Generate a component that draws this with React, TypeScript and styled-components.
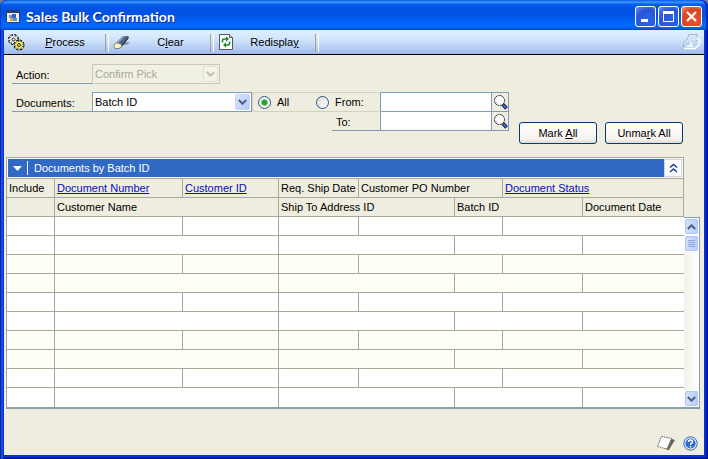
import React from "react";
import styled, { createGlobalStyle, css } from "styled-components";

const LINE = "#a9a99b";
const BLUE_LINE = "#7f9db9";
const FACE = "#eeeddf";

const GlobalStyle = createGlobalStyle`
  * { box-sizing: border-box; }
  body {
    margin: 0;
    background: #77808e;
    color: #000;
    font: 11px/14px "Liberation Sans", Arial, sans-serif;
  }
  button, input, select { font: inherit; color: inherit; }
`;

const Window = styled.div`
  display: flex;
  flex-direction: column;
  min-height: 100vh;
  padding: 0 4px 4px;
  border-radius: 7px 7px 0 0;
  background: #0831d9;
  box-shadow: inset 1px 0 #001ea0, inset 3px 0 #0f4fe6, inset -1px -1px #00138c, inset -2px -2px #001fb4;
`;

const TitleBar = styled.header`
  display: flex;
  align-items: center;
  gap: 2px;
  height: 30px;
  margin: 0 -4px;
  padding: 3px 6px 0;
  border-radius: 7px 7px 0 0;
  background: linear-gradient(#0758dd 0, #3a93ff 2px, #2b86fa 3px, #0a60ee 4px, #0355e6 7px, #0251e2 14px, #0260f6 21px, #026afe 25px, #0262f2 28px, #0140c0 30px);
  box-shadow: inset 1px 0 #0a3fc8, inset -2px 0 #002db4;
`;

const Title = styled.h1`
  flex: 1;
  margin: 0 0 0 4px;
  color: #fff;
  font-family: Lato, "Liberation Sans", sans-serif;
  font-size: 14px;
  line-height: 18px;
  font-weight: bold;
  text-shadow: 1px 1px #0a2a90;
`;

const CaptionButton = styled.button<{ $close?: boolean }>`
  display: grid;
  place-items: center;
  width: 21px;
  height: 21px;
  padding: 0;
  border: 1px solid #fff;
  border-radius: 3px;
  background: ${(p) =>
    p.$close
      ? "radial-gradient(circle at 65% 70%, #e2512b 20%, #d8441f 60%, #ee9377 100%)"
      : "radial-gradient(circle at 65% 70%, #2a5fe8 20%, #2a56d8 60%, #6f93f0 100%)"};
`;

const Client = styled.main`
  display: flex;
  flex: 1;
  flex-direction: column;
  background: ${FACE};
`;

const Toolbar = styled.div`
  display: flex;
  align-items: center;
  height: 25px;
  padding-right: 3px;
  border-bottom: 1px solid #000;
  background: linear-gradient(#dff0ff, #d0e4fb 40%, #b6cdf3 75%, #9fb8e8);
`;

const Tool = styled.button`
  display: flex;
  align-items: center;
  width: 105px;
  height: 24px;
  padding: 0 0 0 4px;
  border: 0;
  background: none;
  span { flex: 1; text-align: center; }
  &::after {
    content: "";
    width: 2px;
    height: 18px;
    margin-top: 2px;
    border-left: 1px solid #a5a397;
    border-right: 1px solid #fff;
  }
`;

const PrintButton = styled.button`
  display: flex;
  margin-left: auto;
  padding: 0;
  border: 0;
  background: none;
`;

const Form = styled.section`
  display: flex;
  gap: 10px;
  padding: 9px 21px 13px 8px;
`;

const Fields = styled.div`
  flex: 1;
  min-width: 0;
`;

const FieldRow = styled.div<{ $gap?: boolean; $overlap?: boolean }>`
  display: flex;
  height: 20px;
  ${(p) => p.$gap && css`margin-bottom: 8px;`}
  ${(p) => p.$overlap && css`margin-top: -1px; padding-left: 320px;`}
`;

const FieldLabel = styled.label<{ $short?: boolean }>`
  flex: none;
  width: ${(p) => (p.$short ? 48 : 80)}px;
  padding: 4px 0 0 4px;
  border-bottom: 1px solid ${BLUE_LINE};
`;

const Combo = styled.div<{ $wide?: boolean; $disabled?: boolean }>`
  display: flex;
  flex: none;
  position: relative;
  width: ${(p) => (p.$wide ? 160 : 128)}px;
  border: 1px solid ${(p) => (p.$disabled ? "#c9c7ba" : BLUE_LINE)};
  background: ${(p) => (p.$disabled ? "#f1f0e4" : "#fff")};
  select {
    width: 100%;
    padding: 0 18px 0 2px;
    border: 0;
    background: none;
    appearance: none;
    outline: none;
    opacity: 1;
    color: ${(p) => (p.$disabled ? "#a8a898" : "#000")};
  }
`;

const ComboArrow = styled.span<{ $disabled?: boolean }>`
  display: grid;
  place-items: center;
  position: absolute;
  inset: 1px 1px 1px auto;
  width: 15px;
  border-radius: 2px;
  pointer-events: none;
  color: ${(p) => (p.$disabled ? "#c4c2b4" : "#4d6185")};
  background: ${(p) => (p.$disabled ? "#f4f3ea" : "linear-gradient(135deg, #dbe6ff, #b4c9f8)")};
  border: 1px solid ${(p) => (p.$disabled ? "#e3e1d4" : "#c3d3fd")};
`;

const RadioGroup = styled.div`
  display: flex;
  flex: none;
  width: 128px;
  padding-left: 5px;
  border: 1px solid #d3d2bf;
  border-right: 0;
  border-radius: 3px;
  label { display: flex; align-items: center; gap: 6px; width: 58px; }
  input {
    appearance: none;
    width: 13px;
    height: 13px;
    margin: 0;
    border: 1px solid #2c5580;
    border-radius: 50%;
    background: linear-gradient(135deg, #dcdcd6, #fff);
  }
  input:checked {
    background: radial-gradient(circle, #21a121 0 2px, #7ccf74 3px, #f4f5f0 4px);
  }
`;

const TextBox = styled.input`
  flex: 1;
  min-width: 0;
  padding: 0 3px;
  border: 1px solid ${BLUE_LINE};
  border-radius: 0;
  outline: none;
  background: #fff;
`;

const Lookup = styled.button`
  display: grid;
  flex: none;
  place-items: center;
  width: 18px;
  margin-left: -1px;
  padding: 0;
  border: 1px solid ${BLUE_LINE};
  background: ${FACE};
`;

const Actions = styled.div`
  display: flex;
  gap: 8px;
  margin-top: 58px;
`;

const PushButton = styled.button`
  width: 78px;
  height: 22px;
  padding: 0;
  border: 1px solid #003c74;
  border-radius: 3px;
  background: linear-gradient(#fff, #f4f3ee 80%, #dfdcd0);
`;

const Panel = styled.section`
  display: grid;
  grid-template-columns: 1fr 16px;
  padding: 0 4px 0 2px;
`;

const PanelHead = styled.div`
  display: flex;
  align-items: center;
  height: 22px;
  padding-left: 6px;
  border: 1px solid ${LINE};
  outline: 1px solid #f8f8f0;
  outline-offset: -2px;
  background: #316ac5;
  color: #fff;
  h2 {
    flex: 1;
    margin: 0 0 0 5px;
    padding-left: 6px;
    border-left: 1px solid #fff;
    font: inherit;
  }
`;

const Collapse = styled.button`
  display: grid;
  place-items: center;
  width: 18px;
  height: 18px;
  margin-right: 1px;
  padding: 0;
  border: 1px solid #cfd6dc;
  background: #fff;
`;

const Table = styled.table`
  grid-column: 1;
  width: 100%;
  table-layout: fixed;
  border-spacing: 0;
  border-left: 1px solid ${LINE};
  border-bottom: 2px solid #8fa1ad;
`;

const cell = css`
  height: 19px;
  padding: 0 0 0 2px;
  border-right: 1px solid ${LINE};
  border-bottom: 1px solid ${LINE};
  text-align: left;
  font-weight: normal;
  white-space: nowrap;
`;

const HeadCell = styled.th`
  ${cell}
  a { color: #0b0bc4; }
`;

const BodyCell = styled.td`
  ${cell}
`;

const BodyRow = styled.tr<{ $tint: boolean }>`
  background: ${(p) => (p.$tint ? "#fffef6" : "#fff")};
  &:last-child td { border-bottom: 0; }
  td:last-child { border-right: 0; }
`;

const ScrollBar = styled.div`
  display: flex;
  flex-direction: column;
  grid-column: 2;
  margin-top: 38px;
  border: 1px solid ${BLUE_LINE};
  border-left: 0;
  border-bottom-width: 2px;
  background: linear-gradient(90deg, #f1f0e9, #fff);
`;

const ScrollPart = styled.button<{ $end?: boolean }>`
  display: grid;
  place-items: center;
  width: 15px;
  height: 17px;
  padding: 0;
  border: 1px solid #fff;
  border-radius: 3px;
  outline: 1px solid #b0c4f4;
  outline-offset: -2px;
  background: linear-gradient(90deg, #d5e1fe, #b9cdfa);
  color: #4d6185;
  ${(p) => p.$end && css`margin-top: auto;`}
`;

const Footer = styled.footer`
  display: flex;
  align-items: center;
  justify-content: flex-end;
  gap: 7px;
  margin-top: auto;
  padding: 0 6px 4px;
  button { display: flex; padding: 0; border: 0; background: none; }
`;

const Chevron = ({ up }: { up?: boolean }) => (
  <svg width="9" height="6" viewBox="0 0 9 6" fill="none" stroke="currentColor" strokeWidth="2">
    <path d={up ? "M.8 5 4.5 1.3 8.2 5" : "M.8 1 4.5 4.7 8.2 1"} />
  </svg>
);

const Gear = ({ x, y, fill }: { x: number; y: number; fill: string }) => (
  <g>
    <circle cx={x} cy={y} r="3.8" fill="none" stroke="#111" strokeWidth="3.4" strokeDasharray="2 .984" />
    <circle cx={x} cy={y} r="3.6" fill={fill} stroke={fill} strokeWidth="2" strokeDasharray="1.2 1.627" />
    <circle cx={x} cy={y} r="1.4" fill="#fff" stroke="#222" />
  </g>
);

const Gears = () => (
  <svg width="17" height="18" viewBox="0 0 17 18">
    <Gear x={5.5} y={6.5} fill="#e6e6e2" />
    <Gear x={11} y={12} fill="#eadf4a" />
  </svg>
);

const Eraser = () => (
  <svg width="18" height="16" viewBox="0 0 18 16">
    <path d="M5 14 12 8h5l-3 3H10l-2 3z" fill="#8d9db8" />
    <path d="M3.5 8.5 10 2h5.5L8.5 10.5z" fill="#556684" />
    <path d="M3.5 8.5 10 2l2 .3-7 7z" fill="#93a2ba" />
    <path d="M8.5 10.5 15.5 2v2.5L8.5 13z" fill="#222c40" />
    <path d="M1 12.5c0-2 1.500-3.500 3-3.800L8.500 10.500V13L6 14.500H2z" fill="#fff3c0" stroke="#6f6a50" strokeWidth=".8" />
  </svg>
);

const RefreshPage = () => (
  <svg width="16" height="18" viewBox="0 0 16 18">
    <path d="M1.500 1.500h10l3 3v12h-13z" fill="#fff" stroke="#555" />
    <path d="M11.500 1.500v3h3" fill="#ddd" stroke="#555" />
    <g fill="none" stroke="#168a2c" strokeWidth="1.600">
      <path d="M4.500 9.500V7.500Q4.500 6 6 6h3" />
      <path d="M11.500 8.500v2q0 1.500-1.500 1.500H7" />
    </g>
    <path d="M8 3.300 11 6 8 8.700zM8 9.300 5 12l3 2.700z" fill="#168a2c" />
  </svg>
);

const Printer = () => (
  <svg width="19" height="18" viewBox="0 0 19 18" fill="none">
    <path d="M2 15.500h11l4.500-4V6.500h-3l2-5" stroke="#fff" strokeWidth="1.500" />
    <path d="M1.500 14V9.500L5 6.500 7 1.500h9L14 6" stroke="#a2a9b3" strokeDasharray="3 1" />
    <path d="M5 11.500l3-2M13.500 8.500l2.500-2" stroke="#a2a9b3" />
    <path d="M5 13h6M7 10.500h3" stroke="#fff" strokeWidth="1.500" />
  </svg>
);

const Magnifier = () => (
  <svg width="15" height="16" viewBox="0 0 15 16">
    <circle cx="6.500" cy="6.500" r="5" fill="#fff" stroke="#222" strokeDasharray="2 .6" />
    <path d="M3 7.500a4 4 0 0 0 2 2.600" fill="none" stroke="#b7c6cc" />
    <path d="M10 10.500l3.500 4" stroke="#111a50" strokeWidth="3.600" />
    <path d="M10.500 11l2.500 3" stroke="#4778ec" strokeWidth="1.600" />
  </svg>
);

const Note = () => (
  <svg width="20" height="16" viewBox="0 0 20 16">
    <path d="M14.500 3.500 19 5 12.500 15.500 9 13.500z" fill="#66665a" />
    <path d="M5.500 1.500 15.500 3.500 11 14 1.500 11.500z" fill="#fff" stroke="#66665c" strokeDasharray="1.500 .8" />
  </svg>
);

const Help = () => (
  <svg width="15" height="15" viewBox="0 0 15 15">
    <circle cx="7.500" cy="7.500" r="6.700" fill="#e4eeff" stroke="#3569b8" />
    <circle cx="7.500" cy="7.500" r="5.100" fill="#2c6bd0" />
    <path d="M5.500 6q0-2 2-2t2 1.700q0 1-1 1.500T7.500 9M7.500 10v1.500" fill="none" stroke="#fff" strokeWidth="1.500" />
  </svg>
);

const AppIcon = () => (
  <svg width="14" height="13" viewBox="0 0 14 13">
    <path d="M.5.500h13v12H.5z" fill="#eef0ee" stroke="#273c70" />
    <path d="M1 1h12v2H1z" fill="#26406f" />
    <path d="M3 5h3v3H3z" fill="#8098c8" />
    <path d="M6 4h4v4H6z" fill="#2d62cc" />
    <path d="M4 8h3v3H4z" fill="#e2a32e" />
    <path d="M7 8h4v3H7z" fill="#3b9ad0" />
  </svg>
);

const COLUMNS = [48, 128, 96, 80, 96, 48, 80];
const UPPER_SPANS = [1, 1, 1, 1, 2, 2];
const LOWER_SPANS = [1, 2, 2, 2, 1];
const ROWS = Array.from({ length: 10 }, (_, i) => i);

export default function App() {
  return (
    <>
      <GlobalStyle />
      <Window>
        <TitleBar>
          <AppIcon />
          <Title>Sales Bulk Confirmation</Title>
          <CaptionButton aria-label="Minimize">
            <svg width="17" height="17"><path d="M4 11h7v3H4z" fill="#fff" /></svg>
          </CaptionButton>
          <CaptionButton aria-label="Maximize">
            <svg width="17" height="17" fill="none" stroke="#fff"><path d="M3.500 4v9.500h10V4" /><path d="M3 4.500h11" strokeWidth="3" /></svg>
          </CaptionButton>
          <CaptionButton $close aria-label="Close">
            <svg width="17" height="17" stroke="#fff" strokeWidth="2.200"><path d="M4 4l9 9M13 4l-9 9" /></svg>
          </CaptionButton>
        </TitleBar>
        <Client>
          <Toolbar>
            <Tool><Gears /><span><u>P</u>rocess</span></Tool>
            <Tool><Eraser /><span>C<u>l</u>ear</span></Tool>
            <Tool><RefreshPage /><span>Redispla<u>y</u></span></Tool>
            <PrintButton aria-label="Print"><Printer /></PrintButton>
          </Toolbar>
          <Form>
            <Fields>
              <FieldRow $gap>
                <FieldLabel htmlFor="action">Action:</FieldLabel>
                <Combo $disabled>
                  <select id="action" disabled><option>Confirm Pick</option></select>
                  <ComboArrow $disabled><Chevron /></ComboArrow>
                </Combo>
              </FieldRow>
              <FieldRow>
                <FieldLabel htmlFor="documents">Documents:</FieldLabel>
                <Combo $wide>
                  <select id="documents"><option>Batch ID</option></select>
                  <ComboArrow><Chevron /></ComboArrow>
                </Combo>
                <RadioGroup>
                  <label><input type="radio" name="range" defaultChecked />All</label>
                  <label><input type="radio" name="range" />From:</label>
                </RadioGroup>
                <TextBox aria-label="From" />
                <Lookup aria-label="Look up from"><Magnifier /></Lookup>
              </FieldRow>
              <FieldRow $overlap>
                <FieldLabel $short htmlFor="to">To:</FieldLabel>
                <TextBox id="to" />
                <Lookup aria-label="Look up to"><Magnifier /></Lookup>
              </FieldRow>
            </Fields>
            <Actions>
              <PushButton>Mark <u>A</u>ll</PushButton>
              <PushButton>Unma<u>r</u>k All</PushButton>
            </Actions>
          </Form>
          <Panel>
            <PanelHead>
              <svg width="9" height="5"><path d="M0 0h9L4.500 5z" fill="#fff" /></svg>
              <h2>Documents by Batch ID</h2>
              <Collapse aria-label="Collapse">
                <svg width="9" height="10" fill="none" stroke="#1c3f94" strokeWidth="1.600">
                  <path d="M1 4.500l3.500-3 3.500 3M1 9l3.500-3L8 9" />
                </svg>
              </Collapse>
            </PanelHead>
            <Table>
              <colgroup>
                {COLUMNS.map((width, i) => <col key={i} width={width} />)}
                <col />
              </colgroup>
              <thead>
                <tr>
                  <HeadCell>Include</HeadCell>
                  <HeadCell><a href="#number">Document Number</a></HeadCell>
                  <HeadCell><a href="#customer">Customer ID</a></HeadCell>
                  <HeadCell>Req. Ship Date</HeadCell>
                  <HeadCell colSpan={2}>Customer PO Number</HeadCell>
                  <HeadCell colSpan={2}><a href="#status">Document Status</a></HeadCell>
                </tr>
                <tr>
                  <HeadCell />
                  <HeadCell colSpan={2}>Customer Name</HeadCell>
                  <HeadCell colSpan={2}>Ship To Address ID</HeadCell>
                  <HeadCell colSpan={2}>Batch ID</HeadCell>
                  <HeadCell>Document Date</HeadCell>
                </tr>
              </thead>
              <tbody>
                {ROWS.map((row) => (
                  <BodyRow key={row} $tint={row % 4 > 1}>
                    {(row % 2 ? LOWER_SPANS : UPPER_SPANS).map((span, i) => (
                      <BodyCell key={i} colSpan={span} />
                    ))}
                  </BodyRow>
                ))}
              </tbody>
            </Table>
            <ScrollBar>
              <ScrollPart aria-label="Scroll up"><Chevron up /></ScrollPart>
              <ScrollPart aria-label="Scroll position">
                <svg width="7" height="8" stroke="#8ba5e0"><path d="M0 .5h7M0 2.500h7M0 4.500h7M0 6.500h7" /></svg>
              </ScrollPart>
              <ScrollPart $end aria-label="Scroll down"><Chevron /></ScrollPart>
            </ScrollBar>
          </Panel>
          <Footer>
            <button aria-label="Notes"><Note /></button>
            <button aria-label="Help"><Help /></button>
          </Footer>
        </Client>
      </Window>
    </>
  );
}
